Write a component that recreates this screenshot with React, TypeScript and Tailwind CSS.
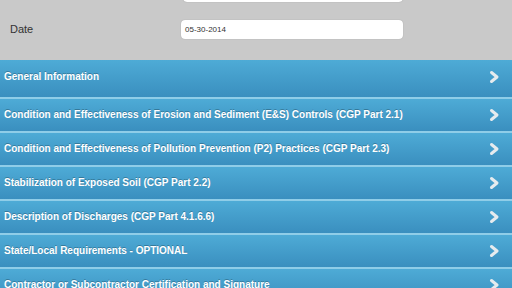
import React from 'react';

const sections = [
  'General Information',
  'Condition and Effectiveness of Erosion and Sediment (E&S) Controls (CGP Part 2.1)',
  'Condition and Effectiveness of Pollution Prevention (P2) Practices (CGP Part 2.3)',
  'Stabilization of Exposed Soil (CGP Part 2.2)',
  'Description of Discharges (CGP Part 4.1.6.6)',
  'State/Local Requirements - OPTIONAL',
  'Contractor or Subcontractor Certification and Signature',
];

function Chevron() {
  return (
    <svg width="14" height="14" viewBox="0 0 14 14" className="shrink-0">
      <path d="M4.5 2.5 L10 7 L4.5 11.5" fill="none" stroke="#e6ebee" strokeWidth="3" strokeLinecap="round" strokeLinejoin="round" />
    </svg>
  );
}

export default function App() {
  return (
    <div className="w-[512px] h-[288px] overflow-hidden bg-[#c9c9c9] font-['Liberation_Sans',Arial,sans-serif]">
      {/* Form area */}
      <div className="h-[60px] relative">
        <div className="absolute left-[183px] top-[-18px] w-[220px] h-[20px] bg-white rounded-[4px] shadow-[0_0_1px_rgba(0,0,0,0.3)]" />
        <div className="flex items-center pt-[20px]">
          <div className="w-[181px] pl-[10px] text-[11px] text-[#333]">Date</div>
          <div className="w-[222px] h-[19px] bg-white rounded-[4px] flex items-center pl-[4px] text-[8px] text-[#333] shadow-[0_0_1px_rgba(0,0,0,0.3)]">
            05-30-2014
          </div>
        </div>
      </div>

      {/* Sections */}
      <div className="flex flex-col">
        {sections.map((s, i) => (
          <div
            key={i}
            className={`${i === 0 ? 'h-[37px] pb-[3px]' : 'h-[34px] border-t-[2px] border-[#8fcde8] pb-[1px]'} flex items-center justify-between pl-[4px] pr-[11px] bg-gradient-to-b from-[#4eabd6] to-[#3a8fbf]`}
          >
            <span className="text-[10px] leading-[12px] font-bold text-white [text-shadow:0_-1px_0_rgba(0,0,0,0.25)]">
              {s}
            </span>
            <Chevron />
          </div>
        ))}
      </div>
    </div>
  );
}
